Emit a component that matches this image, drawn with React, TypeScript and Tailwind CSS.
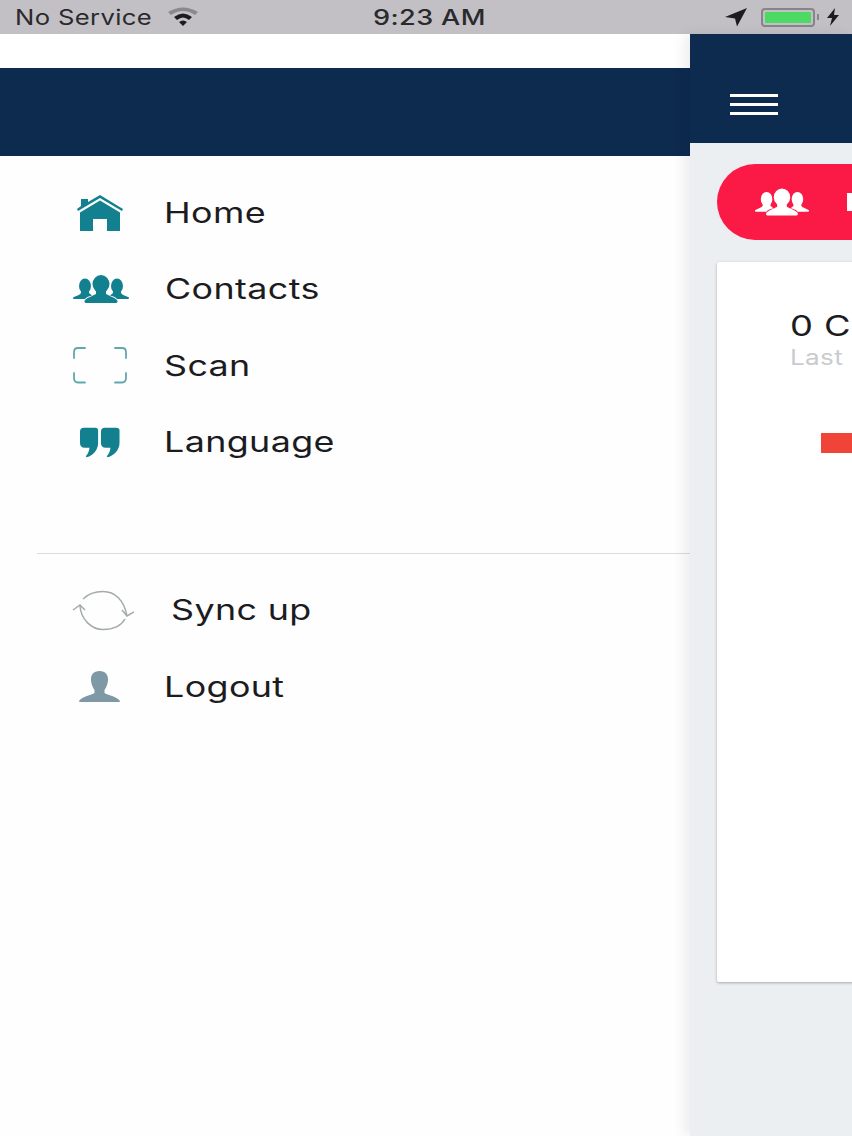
import React from "react";

const Home = () => (
  <svg width="48" height="37" viewBox="0 0 48 37" fill="#12808f">
    <path d="M24 1 L47 15 L46 17 L24 4 L2 17 L1 15 L5 12 V5 H12 V8 Z" />
    <path d="M24 6.500 L44 18.500 V37 H31 V25 H17 V37 H4 V18.500 Z" />
  </svg>
);

const People = ({ color, w = 56, h = 28 }: { color: string; w?: number; h?: number }) => (
  <svg width={w} height={h} viewBox="0 0 56 28" fill={color}>
    <ellipse cx="12" cy="11" rx="6" ry="7.500" />
    <path d="M8 15 H16 V18 L19 20.500 C15 21.500 13 22.500 12 24 H1 C-.5 24 -.5 22.500 1 22 C4 20.500 7 20 8 18 Z" />
    <ellipse cx="44" cy="11" rx="6" ry="7.500" />
    <path d="M48 15 H40 V18 L37 20.500 C41 21.500 43 22.500 44 24 H55 C56.500 24 56.500 22.500 55 22 C52 20.500 49 20 48 18 Z" />
    <ellipse cx="28" cy="9" rx="8.500" ry="9" />
    <path d="M23 14 H33 V19 C36 21 41 22 44 25 C45 26.500 44.500 28 43 28 H13 C11.500 28 11 26.500 12 25 C15 22 20 21 23 19 Z" />
  </svg>
);

const Scan = () => (
  <svg width="54" height="37" viewBox="0 0 54 37" fill="none" stroke="#5fa8ad" strokeWidth="1.800" strokeLinecap="round">
    <path d="M1 11 V5 Q1 1 5 1 H12" />
    <path d="M42 1 H49 Q53 1 53 5 V11" />
    <path d="M1 26 V31 Q1 35.500 5 35.500 H12" />
    <path d="M42 35.500 H49 Q53 35.500 53 31 V26" />
  </svg>
);

const Quote = () => (
  <svg width="40" height="31" viewBox="0 0 42 31" fill="#12808f">
    <path d="M4 0 H16 Q19 0 19 3 V16 C19 23 14 29 7 31 L6 30 C8 28 9.500 25 10 21 H5 Q0 21 0 16 V4 Q0 0 4 0 Z" />
    <path d="M26 0 H38 Q41.500 0 41.500 3 V16 C41.500 23 36 29 29 31 L28 30 C30 28 31.500 25 32 21 H27 Q22 21 22 16 V4 Q22 0 26 0 Z" />
  </svg>
);

const Sync = () => (
  <svg width="62" height="42" viewBox="0 0 62 42" fill="none" stroke="#a3abad" strokeWidth="1.500">
    <path d="M11 10 C16 5 23 2.500 31 2.500 C43 2.500 52 11 55 27" />
    <path d="M8 17 C9 30 19 40.500 31 40.500 C41 40.500 49 37 53 30" />
    <path d="M1 21 L8 16 L13 21" />
    <path d="M50 21 L55 27 L62 23" />
  </svg>
);

const User = () => (
  <svg width="41" height="31" viewBox="0 0 41 31" fill="#7e98a6">
    <path d="M20.500 0 C14.500 0 11.500 4 12 9.500 C12.400 13.500 14 17 15.500 19 V22 C11 24.500 3 25.500 0 30 Q0 31 1 31 H40 Q41 31 41 30 C38 25.500 30 24.500 25.500 22 V19 C27 17 28.600 13.500 29 9.500 C29.500 4 26.500 0 20.500 0 Z" />
  </svg>
);

const Row = ({ icon, label, textX, iconX }: { icon: React.ReactNode; label: string; textX: number; iconX: number }) => (
  <div className="flex h-[76.5px] items-center">
    <div className="flex shrink-0 items-center" style={{ width: textX, paddingLeft: iconX }}>
      {icon}
    </div>
    <span className="origin-left scale-x-[1.28] text-[28px] tracking-[0.3px] text-[#1c1c1e]">{label}</span>
  </div>
);

export default function App() {
  return (
    <div className="flex h-[1136px] w-[852px] flex-col overflow-hidden bg-white font-['Inter',sans-serif]">
      <div className="relative flex h-[34px] shrink-0 items-center justify-between bg-[#c2c0c5] pl-[15px] pr-[12px] text-[#2a2a2c]">
        <span className="mt-[1px] origin-left scale-x-[1.22] text-[21px] leading-[26px] tracking-[0.3px]">No Service</span>
        <svg className="absolute left-[168px] top-[7px]" width="30" height="20" viewBox="0 0 30 20">
          <path d="M0 5 Q15 -4 30 5 L27 8 Q15 0 3 8 Z" fill="#8a8a8e" />
          <path d="M6 10 Q15 3 24 10 L21 13 Q15 8 9 13 Z" fill="#1c1c1e" />
          <path d="M11 15 Q15 12 19 15 L15 19 Z" fill="#1c1c1e" />
        </svg>
        <span className="absolute left-[373px] top-[5px] origin-left scale-x-[1.29] text-[21px] font-medium leading-[26px] tracking-[0.3px]">9:23 AM</span>
        <div className="flex items-center">
          <svg width="24" height="20" viewBox="0 0 24 20" fill="#1c1c1e">
            <path d="M23 1 L1 10 L11 11.500 L13 19.500 Z" />
          </svg>
          <div className="ml-[13px] flex h-[19px] w-[54px] rounded-[4px] border-2 border-[#85858a] p-[2px]">
            <div className="flex-1 rounded-[1px] bg-[#4cd964]" />
          </div>
          <div className="ml-[2px] h-[6px] w-[2px] bg-[#85858a]" />
          <svg className="ml-[7px]" width="14" height="20" viewBox="0 0 14 20" fill="#1c1c1e">
            <path d="M9 1 L1 11 H6 L4 19 L13 8 H8 Z" />
          </svg>
        </div>
      </div>

      <div className="flex min-h-0 flex-1">
        <aside className="flex w-[690px] shrink-0 flex-col bg-[#fefefe]">
          <div className="h-[34px] shrink-0 bg-white" />
          <div className="h-[88px] shrink-0 bg-[#0d2a4f]" />
          <nav className="pt-[18.500px]">
            <Row icon={<Home />} label="Home" textX={164} iconX={76} />
            <Row icon={<People color="#12808f" />} label="Contacts" textX={165} iconX={73} />
            <Row icon={<Scan />} label="Scan" textX={164} iconX={73} />
            <Row icon={<Quote />} label="Language" textX={164} iconX={80} />
          </nav>
          <div className="ml-[37px] mt-[72.500px] h-px bg-[#dcdcde]" />
          <div className="pt-[18px]">
            <Row icon={<Sync />} label="Sync up" textX={171} iconX={72} />
            <Row icon={<User />} label="Logout" textX={164} iconX={79} />
          </div>
        </aside>

        <main className="relative z-10 flex min-w-0 flex-1 flex-col overflow-hidden bg-[#eceff2] shadow-[-6px_0_12px_rgba(0,0,0,0.07)]">
          <header className="flex h-[109px] shrink-0 items-center bg-[#0d2a4f] pl-[40px]">
            <div className="mt-[32px] flex w-[48px] flex-col gap-[6px]">
              <div className="h-[3px] bg-white" />
              <div className="h-[3px] bg-white" />
              <div className="h-[3px] bg-white" />
            </div>
          </header>
          <div className="pl-[27px] pt-[21px]">
            <div className="flex h-[76px] w-[300px] items-center rounded-l-[38px] bg-[#fb1a45] pl-[38px]">
              <People color="#ffffff" w={54} h={28} />
              <div className="ml-[38px] h-[18px] w-[12px] shrink-0 bg-white" />
            </div>
            <div className="mt-[22px] h-[720px] w-[300px] rounded-[2px] bg-white pl-[73px] pt-[46px] shadow-[0_1px_3px_rgba(0,0,0,0.3)]">
              <div className="w-fit origin-left scale-x-[1.3] text-[28px] leading-[36px] tracking-[0.3px] text-[#1c1c1e]">0 C</div>
              <div className="w-fit origin-left scale-x-[1.24] text-[21px] leading-[28px] tracking-[0.3px] text-[#c9cbce]">Last</div>
              <div className="ml-[31px] mt-[61px] h-[20px] w-[100px] bg-[#f04438]" />
            </div>
          </div>
        </main>
      </div>
    </div>
  );
}
